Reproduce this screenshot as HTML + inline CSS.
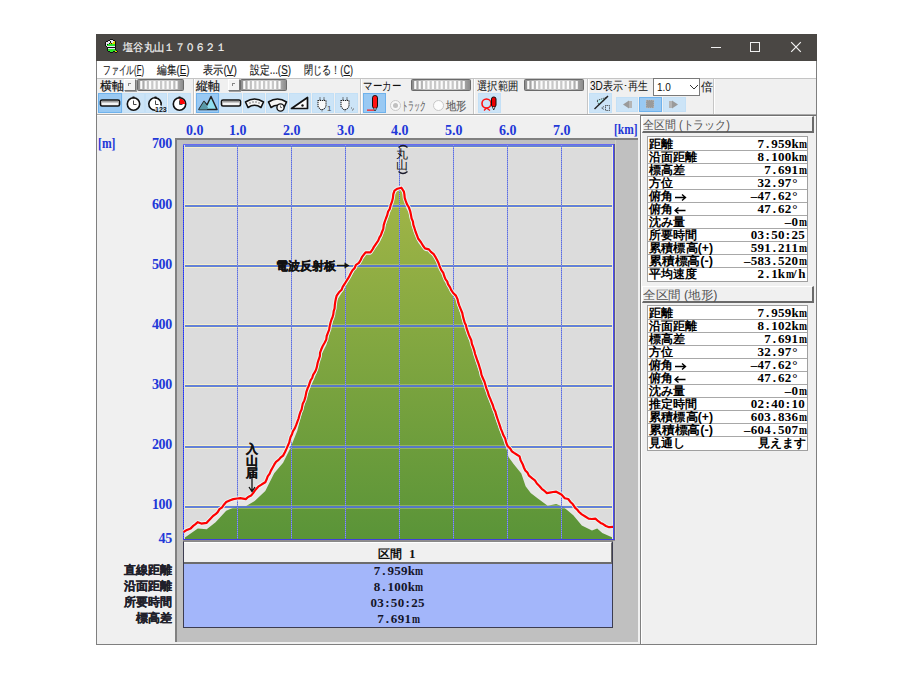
<!DOCTYPE html><html><head><meta charset="utf-8"><style>
*{margin:0;padding:0;box-sizing:border-box}
html,body{width:900px;height:675px;background:#fff;overflow:hidden;font-family:"Liberation Sans",sans-serif}
.a{position:absolute}
.t{position:absolute;white-space:nowrap;transform-origin:0 0;line-height:1}
.btn{position:absolute;background:#cce4f7;border:1px solid #c4e0f6}
.btn.sel{background:#99c9f3;border-color:#6fb2ec}
.vs{position:absolute;width:2px;background:#fff;border-left:1px solid #c6c6c6}
.mono{font-family:"Liberation Serif",serif;font-weight:bold}
.mono i{display:inline-block;width:6.8px;text-align:center;font-style:normal}
.mono i.n{transform:scaleX(0.74)}
</style></head><body>
<div class="a" style="left:96px;top:34px;width:721px;height:611px;background:#f0f0f0;border:1px solid #7f7f7f;border-top:none"></div>
<div class="a" style="left:96px;top:34px;width:721px;height:27px;background:#4a4744"></div>
<svg class="a" style="left:104px;top:39px" width="14" height="14" shape-rendering="crispEdges"><rect x="6" y="0" width="1" height="1" fill="#111"/><rect x="7" y="0" width="1" height="1" fill="#111"/><rect x="8" y="0" width="1" height="1" fill="#111"/><rect x="4" y="1" width="1" height="1" fill="#111"/><rect x="5" y="1" width="1" height="1" fill="#111"/><rect x="6" y="1" width="1" height="1" fill="#e6e6ee"/><rect x="7" y="1" width="1" height="1" fill="#e6e6ee"/><rect x="8" y="1" width="1" height="1" fill="#e6e6ee"/><rect x="9" y="1" width="1" height="1" fill="#111"/><rect x="10" y="1" width="1" height="1" fill="#111"/><rect x="2" y="2" width="1" height="1" fill="#111"/><rect x="3" y="2" width="1" height="1" fill="#111"/><rect x="4" y="2" width="1" height="1" fill="#e6e6ee"/><rect x="5" y="2" width="1" height="1" fill="#e6e6ee"/><rect x="6" y="2" width="1" height="1" fill="#111"/><rect x="7" y="2" width="1" height="1" fill="#e6e6ee"/><rect x="8" y="2" width="1" height="1" fill="#e6e6ee"/><rect x="9" y="2" width="1" height="1" fill="#e6e6ee"/><rect x="10" y="2" width="1" height="1" fill="#e0d400"/><rect x="11" y="2" width="1" height="1" fill="#111"/><rect x="1" y="3" width="1" height="1" fill="#111"/><rect x="2" y="3" width="1" height="1" fill="#e6e6ee"/><rect x="3" y="3" width="1" height="1" fill="#e6e6ee"/><rect x="4" y="3" width="1" height="1" fill="#e6e6ee"/><rect x="5" y="3" width="1" height="1" fill="#e6e6ee"/><rect x="6" y="3" width="1" height="1" fill="#111"/><rect x="7" y="3" width="1" height="1" fill="#e6e6ee"/><rect x="8" y="3" width="1" height="1" fill="#e6e6ee"/><rect x="9" y="3" width="1" height="1" fill="#e0d400"/><rect x="10" y="3" width="1" height="1" fill="#e0d400"/><rect x="11" y="3" width="1" height="1" fill="#111"/><rect x="1" y="4" width="1" height="1" fill="#111"/><rect x="2" y="4" width="1" height="1" fill="#e6e6ee"/><rect x="3" y="4" width="1" height="1" fill="#e6e6ee"/><rect x="4" y="4" width="1" height="1" fill="#e6e6ee"/><rect x="5" y="4" width="1" height="1" fill="#111"/><rect x="6" y="4" width="1" height="1" fill="#e0d400"/><rect x="7" y="4" width="1" height="1" fill="#111"/><rect x="8" y="4" width="1" height="1" fill="#e0d400"/><rect x="9" y="4" width="1" height="1" fill="#e0d400"/><rect x="10" y="4" width="1" height="1" fill="#e0d400"/><rect x="11" y="4" width="1" height="1" fill="#111"/><rect x="1" y="5" width="1" height="1" fill="#111"/><rect x="2" y="5" width="1" height="1" fill="#e6e6ee"/><rect x="3" y="5" width="1" height="1" fill="#111"/><rect x="4" y="5" width="1" height="1" fill="#2ae82a"/><rect x="5" y="5" width="1" height="1" fill="#2ae82a"/><rect x="6" y="5" width="1" height="1" fill="#2ae82a"/><rect x="7" y="5" width="1" height="1" fill="#2ae82a"/><rect x="8" y="5" width="1" height="1" fill="#2ae82a"/><rect x="9" y="5" width="1" height="1" fill="#2ae82a"/><rect x="10" y="5" width="1" height="1" fill="#2ae82a"/><rect x="11" y="5" width="1" height="1" fill="#111"/><rect x="1" y="6" width="1" height="1" fill="#111"/><rect x="2" y="6" width="1" height="1" fill="#e6e6ee"/><rect x="3" y="6" width="1" height="1" fill="#2ae82a"/><rect x="4" y="6" width="1" height="1" fill="#2ae82a"/><rect x="5" y="6" width="1" height="1" fill="#2ae82a"/><rect x="6" y="6" width="1" height="1" fill="#2ae82a"/><rect x="7" y="6" width="1" height="1" fill="#2ae82a"/><rect x="8" y="6" width="1" height="1" fill="#2ae82a"/><rect x="9" y="6" width="1" height="1" fill="#2ae82a"/><rect x="10" y="6" width="1" height="1" fill="#2ae82a"/><rect x="11" y="6" width="1" height="1" fill="#111"/><rect x="2" y="7" width="1" height="1" fill="#111"/><rect x="3" y="7" width="1" height="1" fill="#e6e6ee"/><rect x="4" y="7" width="1" height="1" fill="#e6e6ee"/><rect x="5" y="7" width="1" height="1" fill="#e6e6ee"/><rect x="6" y="7" width="1" height="1" fill="#e6e6ee"/><rect x="7" y="7" width="1" height="1" fill="#e6e6ee"/><rect x="8" y="7" width="1" height="1" fill="#e6e6ee"/><rect x="9" y="7" width="1" height="1" fill="#e6e6ee"/><rect x="10" y="7" width="1" height="1" fill="#e6e6ee"/><rect x="11" y="7" width="1" height="1" fill="#111"/><rect x="3" y="8" width="1" height="1" fill="#111"/><rect x="4" y="8" width="1" height="1" fill="#111"/><rect x="5" y="8" width="1" height="1" fill="#111"/><rect x="6" y="8" width="1" height="1" fill="#111"/><rect x="7" y="8" width="1" height="1" fill="#111"/><rect x="8" y="8" width="1" height="1" fill="#111"/><rect x="9" y="8" width="1" height="1" fill="#111"/><rect x="10" y="8" width="1" height="1" fill="#111"/><rect x="11" y="8" width="1" height="1" fill="#111"/><rect x="3" y="9" width="1" height="1" fill="#111"/><rect x="4" y="9" width="1" height="1" fill="#e6e6ee"/><rect x="5" y="9" width="1" height="1" fill="#e6e6ee"/><rect x="6" y="9" width="1" height="1" fill="#e6e6ee"/><rect x="7" y="9" width="1" height="1" fill="#e6e6ee"/><rect x="8" y="9" width="1" height="1" fill="#e6e6ee"/><rect x="9" y="9" width="1" height="1" fill="#e6e6ee"/><rect x="10" y="9" width="1" height="1" fill="#e6e6ee"/><rect x="11" y="9" width="1" height="1" fill="#111"/><rect x="3" y="10" width="1" height="1" fill="#111"/><rect x="4" y="10" width="1" height="1" fill="#2ae82a"/><rect x="5" y="10" width="1" height="1" fill="#2ae82a"/><rect x="6" y="10" width="1" height="1" fill="#2ae82a"/><rect x="7" y="10" width="1" height="1" fill="#2ae82a"/><rect x="8" y="10" width="1" height="1" fill="#2ae82a"/><rect x="9" y="10" width="1" height="1" fill="#2ae82a"/><rect x="10" y="10" width="1" height="1" fill="#2ae82a"/><rect x="11" y="10" width="1" height="1" fill="#111"/><rect x="3" y="11" width="1" height="1" fill="#111"/><rect x="4" y="11" width="1" height="1" fill="#2ae82a"/><rect x="5" y="11" width="1" height="1" fill="#2ae82a"/><rect x="6" y="11" width="1" height="1" fill="#2ae82a"/><rect x="7" y="11" width="1" height="1" fill="#2ae82a"/><rect x="8" y="11" width="1" height="1" fill="#2ae82a"/><rect x="9" y="11" width="1" height="1" fill="#2ae82a"/><rect x="10" y="11" width="1" height="1" fill="#2ae82a"/><rect x="11" y="11" width="1" height="1" fill="#2ae82a"/><rect x="12" y="11" width="1" height="1" fill="#111"/><rect x="4" y="12" width="1" height="1" fill="#111"/><rect x="5" y="12" width="1" height="1" fill="#111"/><rect x="6" y="12" width="1" height="1" fill="#2ae82a"/><rect x="7" y="12" width="1" height="1" fill="#2ae82a"/><rect x="8" y="12" width="1" height="1" fill="#2ae82a"/><rect x="9" y="12" width="1" height="1" fill="#111"/><rect x="10" y="12" width="1" height="1" fill="#111"/><rect x="11" y="12" width="1" height="1" fill="#e0d400"/><rect x="12" y="12" width="1" height="1" fill="#e0d400"/><rect x="13" y="12" width="1" height="1" fill="#111"/><rect x="6" y="13" width="1" height="1" fill="#111"/><rect x="7" y="13" width="1" height="1" fill="#111"/><rect x="8" y="13" width="1" height="1" fill="#111"/><rect x="11" y="13" width="1" height="1" fill="#111"/><rect x="12" y="13" width="1" height="1" fill="#111"/></svg>
<div class="t" id="f1" style="left:123px;top:42px;font-size:11px;color:#f6f6f6;-webkit-text-stroke:0.2px;transform:scaleX(0.9364);">塩谷丸山１７０６２１</div>
<div class="a" style="left:711px;top:47px;width:10px;height:1px;background:#f0f0f0"></div>
<div class="a" style="left:750px;top:42px;width:10px;height:10px;border:1px solid #f0f0f0"></div>
<svg class="a" style="left:790px;top:41px" width="12" height="12"><path d="M1.2 1.2L10.8 10.8M10.8 1.2L1.2 10.8" stroke="#f4f4f4" stroke-width="1.2"/></svg>
<div class="a" style="left:97px;top:61px;width:719px;height:17px;background:#fff"></div>
<div class="t" id="f2" style="left:103px;top:64px;font-size:12px;color:#1a1a1a;-webkit-text-stroke:0.15px;transform:scaleX(0.6473);">ファイル(<u>F</u>)</div>
<div class="t" id="f3" style="left:157px;top:64px;font-size:12px;color:#1a1a1a;-webkit-text-stroke:0.15px;transform:scaleX(0.8122);">編集(<u>E</u>)</div>
<div class="t" id="f4" style="left:203px;top:64px;font-size:12px;color:#1a1a1a;-webkit-text-stroke:0.15px;transform:scaleX(0.8497);">表示(<u>V</u>)</div>
<div class="t" id="f5" style="left:250px;top:64px;font-size:12px;color:#1a1a1a;-webkit-text-stroke:0.15px;transform:scaleX(0.8197);">設定...(<u>S</u>)</div>
<div class="t" id="f6" style="left:304px;top:64px;font-size:12px;color:#1a1a1a;-webkit-text-stroke:0.15px;transform:scaleX(0.7577);">閉じる！(<u>C</u>)</div>
<div class="a" style="left:97px;top:78px;width:719px;height:37px;background:#f0f0f0;border-top:1px solid #c4c4c4;border-bottom:1px solid #a8a8a8"></div>
<div class="a" style="left:97px;top:115px;width:719px;height:1px;background:#fff"></div>
<div class="t" style="left:100px;top:80px;font-size:12px;color:#111;-webkit-text-stroke:0.2px;">横軸</div>
<div class="a" style="left:124px;top:79px;width:12px;height:12px;background:#f4f4f4;border-right:1px solid #777;border-bottom:1px solid #777;border-left:1px solid #fff;border-top:1px solid #fff;box-shadow:1px 1px 0 #a0a0a0"></div>
<div class="a" style="left:128px;top:83px;width:3px;height:3px;border-left:1px solid #888;border-top:1px solid #888"></div>
<svg class="a" style="left:137px;top:79px" width="47" height="12"><defs><linearGradient id="sg137" x1="0" x2="1"><stop offset="0" stop-color="#8a8a8a"/><stop offset="0.25" stop-color="#c8c8c8"/><stop offset="0.75" stop-color="#c8c8c8"/><stop offset="1" stop-color="#8a8a8a"/></linearGradient></defs><rect x="0.5" y="0.5" width="46" height="11" rx="1" fill="url(#sg137)" stroke="#6a6a6a"/><rect x="3.2" y="2" width="2.2" height="8" fill="#fbfbfb"/><rect x="7.6" y="2" width="2.2" height="8" fill="#fbfbfb"/><rect x="12.0" y="2" width="2.2" height="8" fill="#fbfbfb"/><rect x="16.4" y="2" width="2.2" height="8" fill="#fbfbfb"/><rect x="20.8" y="2" width="2.2" height="8" fill="#fbfbfb"/><rect x="25.2" y="2" width="2.2" height="8" fill="#fbfbfb"/><rect x="29.6" y="2" width="2.2" height="8" fill="#fbfbfb"/><rect x="34.0" y="2" width="2.2" height="8" fill="#fbfbfb"/><rect x="38.4" y="2" width="2.2" height="8" fill="#fbfbfb"/></svg>
<div class="t" style="left:196px;top:80px;font-size:12px;color:#111;-webkit-text-stroke:0.2px;">縦軸</div>
<div class="a" style="left:228px;top:79px;width:12px;height:12px;background:#f4f4f4;border-right:1px solid #777;border-bottom:1px solid #777;border-left:1px solid #fff;border-top:1px solid #fff;box-shadow:1px 1px 0 #a0a0a0"></div>
<div class="a" style="left:232px;top:83px;width:3px;height:3px;border-left:1px solid #888;border-top:1px solid #888"></div>
<svg class="a" style="left:240px;top:79px" width="47" height="12"><defs><linearGradient id="sg240" x1="0" x2="1"><stop offset="0" stop-color="#8a8a8a"/><stop offset="0.25" stop-color="#c8c8c8"/><stop offset="0.75" stop-color="#c8c8c8"/><stop offset="1" stop-color="#8a8a8a"/></linearGradient></defs><rect x="0.5" y="0.5" width="46" height="11" rx="1" fill="url(#sg240)" stroke="#6a6a6a"/><rect x="3.2" y="2" width="2.2" height="8" fill="#fbfbfb"/><rect x="7.6" y="2" width="2.2" height="8" fill="#fbfbfb"/><rect x="12.0" y="2" width="2.2" height="8" fill="#fbfbfb"/><rect x="16.4" y="2" width="2.2" height="8" fill="#fbfbfb"/><rect x="20.8" y="2" width="2.2" height="8" fill="#fbfbfb"/><rect x="25.2" y="2" width="2.2" height="8" fill="#fbfbfb"/><rect x="29.6" y="2" width="2.2" height="8" fill="#fbfbfb"/><rect x="34.0" y="2" width="2.2" height="8" fill="#fbfbfb"/><rect x="38.4" y="2" width="2.2" height="8" fill="#fbfbfb"/></svg>
<div class="t" id="f7" style="left:363px;top:80px;font-size:12px;color:#111;transform:scaleX(0.7917);">マーカー</div>
<svg class="a" style="left:411px;top:79px" width="60" height="12"><defs><linearGradient id="sg411" x1="0" x2="1"><stop offset="0" stop-color="#8a8a8a"/><stop offset="0.25" stop-color="#c8c8c8"/><stop offset="0.75" stop-color="#c8c8c8"/><stop offset="1" stop-color="#8a8a8a"/></linearGradient></defs><rect x="0.5" y="0.5" width="59" height="11" rx="1" fill="url(#sg411)" stroke="#6a6a6a"/><rect x="3.2" y="2" width="2.2" height="8" fill="#fbfbfb"/><rect x="7.6" y="2" width="2.2" height="8" fill="#fbfbfb"/><rect x="12.0" y="2" width="2.2" height="8" fill="#fbfbfb"/><rect x="16.4" y="2" width="2.2" height="8" fill="#fbfbfb"/><rect x="20.8" y="2" width="2.2" height="8" fill="#fbfbfb"/><rect x="25.2" y="2" width="2.2" height="8" fill="#fbfbfb"/><rect x="29.6" y="2" width="2.2" height="8" fill="#fbfbfb"/><rect x="34.0" y="2" width="2.2" height="8" fill="#fbfbfb"/><rect x="38.4" y="2" width="2.2" height="8" fill="#fbfbfb"/><rect x="42.8" y="2" width="2.2" height="8" fill="#fbfbfb"/><rect x="47.2" y="2" width="2.2" height="8" fill="#fbfbfb"/><rect x="51.6" y="2" width="2.2" height="8" fill="#fbfbfb"/></svg>
<div class="t" id="f8" style="left:477px;top:80px;font-size:12px;color:#111;transform:scaleX(0.8646);">選択範囲</div>
<svg class="a" style="left:524px;top:79px" width="60" height="12"><defs><linearGradient id="sg524" x1="0" x2="1"><stop offset="0" stop-color="#8a8a8a"/><stop offset="0.25" stop-color="#c8c8c8"/><stop offset="0.75" stop-color="#c8c8c8"/><stop offset="1" stop-color="#8a8a8a"/></linearGradient></defs><rect x="0.5" y="0.5" width="59" height="11" rx="1" fill="url(#sg524)" stroke="#6a6a6a"/><rect x="3.2" y="2" width="2.2" height="8" fill="#fbfbfb"/><rect x="7.6" y="2" width="2.2" height="8" fill="#fbfbfb"/><rect x="12.0" y="2" width="2.2" height="8" fill="#fbfbfb"/><rect x="16.4" y="2" width="2.2" height="8" fill="#fbfbfb"/><rect x="20.8" y="2" width="2.2" height="8" fill="#fbfbfb"/><rect x="25.2" y="2" width="2.2" height="8" fill="#fbfbfb"/><rect x="29.6" y="2" width="2.2" height="8" fill="#fbfbfb"/><rect x="34.0" y="2" width="2.2" height="8" fill="#fbfbfb"/><rect x="38.4" y="2" width="2.2" height="8" fill="#fbfbfb"/><rect x="42.8" y="2" width="2.2" height="8" fill="#fbfbfb"/><rect x="47.2" y="2" width="2.2" height="8" fill="#fbfbfb"/><rect x="51.6" y="2" width="2.2" height="8" fill="#fbfbfb"/></svg>
<div class="t" id="f9" style="left:590px;top:80px;font-size:12px;color:#111;transform:scaleX(0.8364);">3D表示･再生</div>
<div class="a" style="left:653px;top:78px;width:47px;height:18px;background:#fff;border:1px solid #7a7a7a"></div>
<div class="t" style="left:657px;top:83px;font-size:10px;color:#111;">1.0</div>
<svg class="a" style="left:689px;top:84px" width="10" height="6"><path d="M1 1L5 5L9 1" fill="none" stroke="#333" stroke-width="1"/></svg>
<div class="t" style="left:701px;top:81px;font-size:12px;color:#111;">倍</div>
<div class="vs" style="left:193px;top:79px;height:35px"></div>
<div class="vs" style="left:360px;top:79px;height:35px"></div>
<div class="vs" style="left:473px;top:79px;height:35px"></div>
<div class="vs" style="left:587px;top:79px;height:35px"></div>
<div class="vs" style="left:713px;top:79px;height:35px"></div>
<div class="btn sel" style="left:98px;top:93px;width:24px;height:20px"></div>
<div class="btn" style="left:122px;top:93px;width:23px;height:20px"></div>
<div class="btn" style="left:145px;top:93px;width:22px;height:20px"></div>
<div class="btn" style="left:168px;top:93px;width:23px;height:20px"></div>
<div class="btn sel" style="left:196px;top:93px;width:23px;height:20px"></div>
<div class="btn" style="left:219px;top:93px;width:23px;height:20px"></div>
<div class="btn" style="left:243px;top:93px;width:22px;height:20px"></div>
<div class="btn" style="left:266px;top:93px;width:22px;height:20px"></div>
<div class="btn" style="left:289px;top:93px;width:22px;height:20px"></div>
<div class="btn" style="left:312px;top:93px;width:22px;height:20px"></div>
<div class="btn" style="left:335px;top:93px;width:23px;height:20px"></div>
<div class="btn sel" style="left:363px;top:93px;width:23px;height:20px"></div>
<div class="btn" style="left:478px;top:93px;width:23px;height:20px"></div>
<div class="btn" style="left:589px;top:93px;width:23px;height:20px"></div>
<div class="btn" style="left:616px;top:97px;width:22px;height:15px"></div>
<div class="btn sel" style="left:639px;top:97px;width:23px;height:15px"></div>
<div class="btn" style="left:663px;top:97px;width:23px;height:15px"></div>

<svg class="a" style="left:99px;top:99px" width="22" height="8"><rect x="1.5" y="1" width="19" height="6" rx="1.5" fill="#f4f4f4" stroke="#111" stroke-width="1.6"/><path d="M4 2V3.5M6 2V3.5M8 2V3.5M10 2V3.5M12 2V3.5M14 2V3.5M16 2V3.5M18 2V3.5" stroke="#333" stroke-width="0.9"/></svg>
<svg class="a" style="left:125px;top:95px" width="18" height="17"><circle cx="8.5" cy="9" r="6.2" fill="#fff" stroke="#111" stroke-width="1.6"/><path d="M7.5 1.5h2v2h-2z" fill="#111"/><path d="M8.5 5.5V9.5H11.5" fill="none" stroke="#444" stroke-width="1"/></svg>
<svg class="a" style="left:147px;top:95px" width="20" height="17"><path d="M14 10.5 A6.2 6.2 0 1 0 8.5 15.2" fill="#fff" stroke="#111" stroke-width="1.6"/><path d="M7.5 1.5h2v2h-2z" fill="#111"/><path d="M8.5 5.5V9.5H11.5" fill="none" stroke="#444" stroke-width="1"/><text x="8" y="16.5" font-size="7" font-weight="bold" font-family="Liberation Sans" fill="#111">123</text></svg>
<svg class="a" style="left:171px;top:95px" width="18" height="17"><circle cx="8.5" cy="9" r="6.2" fill="#fff" stroke="#111" stroke-width="1.6"/><path d="M8.5 3.5 A5.5 5.5 0 0 1 14 9 L8.5 9Z" fill="#ff0000"/><path d="M7.5 1.5h2v2h-2z" fill="#111"/><path d="M8.5 5.5V9.5H11.5" fill="none" stroke="#444" stroke-width="1"/></svg>
<svg class="a" style="left:197px;top:95px" width="22" height="16"><path d="M2 14.5L7 6.5L10 10L14 1.5L20 14.5Z" fill="#90e0f0" stroke="#222" stroke-width="1.5" stroke-linejoin="round"/><path d="M2 14.5L7 6.5L11 12.5L10 14.5Z" fill="#5a9aa8"/></svg>
<svg class="a" style="left:220px;top:99px" width="22" height="8"><rect x="1.5" y="1" width="19" height="6" rx="1.5" fill="#f4f4f4" stroke="#111" stroke-width="1.6"/><path d="M4 2V3.5M6 2V3.5M8 2V3.5M10 2V3.5M12 2V3.5M14 2V3.5M16 2V3.5M18 2V3.5" stroke="#333" stroke-width="0.9"/></svg>
<svg class="a" style="left:244px;top:97px" width="21" height="12"><path d="M1.5 5 Q10.5 -1 19.5 5 L17 10.5 Q10.5 6 4 10.5Z" fill="#f6f6f6" stroke="#111" stroke-width="1.6" stroke-linejoin="round"/><path d="M6 5v2M9 4v2M12 4v2M15 5v2" stroke="#666" stroke-width="0.8"/></svg>
<svg class="a" style="left:267px;top:96px" width="21" height="16"><path d="M1.5 6 Q10.5 0 19.5 6 L17 11.5 Q10.5 7 4 11.5Z" fill="#f6f6f6" stroke="#111" stroke-width="1.6" stroke-linejoin="round"/><circle cx="13.5" cy="11.5" r="3.6" fill="#f6f6f6" stroke="#111" stroke-width="1.4"/><path d="M13.5 9.5v2h1.5" stroke="#555" stroke-width="0.8" fill="none"/></svg>
<svg class="a" style="left:290px;top:96px" width="20" height="14"><path d="M1.5 12.5L17.5 1.5V12.5Z" fill="#fafafa" stroke="#111" stroke-width="1.7" stroke-linejoin="round"/><circle cx="12.5" cy="9.5" r="1.2" fill="#111"/></svg>
<svg class="a" style="left:314px;top:96px" width="20" height="16"><path d="M4 4.5h8v6l-2.5 3h-3l-2.5-3z" fill="#fafafa" stroke="#222" stroke-width="1.1" stroke-dasharray="1.2 0.8"/><path d="M6 1.5v3M10 1.5v3M8 13.5v2" stroke="#222" stroke-width="1.1" stroke-dasharray="1 0.8"/><text x="13" y="15" font-size="8" font-family="Liberation Sans" fill="#444">1</text></svg>
<svg class="a" style="left:337px;top:96px" width="20" height="16"><path d="M4 4.5h8v6l-2.5 3h-3l-2.5-3z" fill="#fafafa" stroke="#222" stroke-width="1.1" stroke-dasharray="1.2 0.8"/><path d="M6 1.5v3M10 1.5v3M8 13.5v2" stroke="#222" stroke-width="1.1" stroke-dasharray="1 0.8"/><path d="M14 12h1M16 13h1M15 14h1" stroke="#666" stroke-width="1"/></svg>
<svg class="a" style="left:366px;top:94px" width="18" height="18"><rect x="6.5" y="1.5" width="5" height="13" rx="2.4" fill="#ff1010" stroke="#111" stroke-width="1"/><path d="M7.5 14.5L9 17L10.5 14.5" fill="#f4f4f4" stroke="#111" stroke-width="0.8"/><rect x="1" y="15.5" width="7" height="1.3" fill="#ff2020"/></svg>
<svg class="a" style="left:480px;top:95px" width="20" height="17"><circle cx="6.5" cy="8.5" r="4.5" fill="none" stroke="#ff1010" stroke-width="1.6"/><path d="M6.5 13 L4 15.5M6.5 13 L10 15.5" stroke="#ff1010" stroke-width="1.3"/><rect x="11.5" y="2" width="4.5" height="10" rx="2" fill="#e00" stroke="#111" stroke-width="1"/><path d="M12.5 12L13.7 15L15 12" fill="#fff" stroke="#111" stroke-width="0.8"/></svg>
<svg class="a" style="left:591px;top:94px" width="22" height="18"><path d="M6 6.5L16.5 3L8 11Z" fill="#b8eef4" stroke="#333" stroke-width="0.9" stroke-dasharray="1.2 0.8"/><path d="M3.5 15L17 2" stroke="#222" stroke-width="1.4"/><path d="M13 12.5L10.5 14L13 15.5" fill="none" stroke="#333" stroke-width="0.9" stroke-dasharray="1 0.7"/><rect x="14.5" y="11.5" width="4" height="5" fill="none" stroke="#333" stroke-width="0.9" stroke-dasharray="1 0.7"/></svg>
<svg class="a" style="left:620px;top:99px" width="14" height="11"><path d="M3 5.5L9 1.5V9.5Z" fill="#9a9a9a"/><rect x="9" y="2" width="3" height="7" fill="#b4b4b4"/></svg>
<svg class="a" style="left:645px;top:99px" width="11" height="11"><rect x="1" y="1" width="8" height="8" fill="#9a9a9a" stroke="#c6c6c6" stroke-width="0.8" stroke-dasharray="1 1"/></svg>
<svg class="a" style="left:667px;top:99px" width="14" height="11"><rect x="2" y="2" width="3" height="7" fill="#b4b4b4"/><path d="M11 5.5L5 1.5V9.5Z" fill="#9a9a9a"/></svg>

<div class="a" style="left:389.5px;top:100px;width:11px;height:11px;border-radius:50%;border:1px solid #c8c8c8;background:#f8f8f8"></div>
<div class="a" style="left:392.5px;top:103px;width:5px;height:5px;border-radius:50%;background:#c0c0c0"></div>
<div class="t" id="f10" style="left:402px;top:100px;font-size:12px;color:#5a5a5a;-webkit-text-stroke:0.15px;transform:scaleX(0.4896);">トラック</div>
<div class="a" style="left:432.5px;top:100px;width:11px;height:11px;border-radius:50%;border:1px solid #c8c8c8;background:#fcfcfc"></div>
<div class="t" id="f11" style="left:446px;top:100px;font-size:12px;color:#5a5a5a;-webkit-text-stroke:0.15px;transform:scaleX(0.8542);">地形</div>
<div class="a" style="left:175px;top:138px;width:464px;height:504px;background:#c0c0c0;border-top:2px solid #808080;border-left:2px solid #808080"></div>
<div class="a" style="left:638px;top:116px;width:2px;height:528px;background:#f0f0f0"></div>
<div class="a" style="left:640px;top:115px;width:1px;height:529px;background:#808080"></div>
<div class="a" style="left:641px;top:115px;width:1px;height:529px;background:#fff"></div>
<div class="t" id="f12" style="left:98px;top:137px;font-size:14px;color:#2238d8;font-weight:bold;font-family:'Liberation Serif',serif;transform:scaleX(0.8333);">[m]</div>
<div class="t" style="left:112px;width:60px;text-align:right;top:136px;font:bold 14px 'Liberation Serif',serif;letter-spacing:-0.3px;color:#2238d8">700</div>
<div class="t" style="left:112px;width:60px;text-align:right;top:197px;font:bold 14px 'Liberation Serif',serif;letter-spacing:-0.3px;color:#2238d8">600</div>
<div class="t" style="left:112px;width:60px;text-align:right;top:257px;font:bold 14px 'Liberation Serif',serif;letter-spacing:-0.3px;color:#2238d8">500</div>
<div class="t" style="left:112px;width:60px;text-align:right;top:317px;font:bold 14px 'Liberation Serif',serif;letter-spacing:-0.3px;color:#2238d8">400</div>
<div class="t" style="left:112px;width:60px;text-align:right;top:377px;font:bold 14px 'Liberation Serif',serif;letter-spacing:-0.3px;color:#2238d8">300</div>
<div class="t" style="left:112px;width:60px;text-align:right;top:437px;font:bold 14px 'Liberation Serif',serif;letter-spacing:-0.3px;color:#2238d8">200</div>
<div class="t" style="left:112px;width:60px;text-align:right;top:497px;font:bold 14px 'Liberation Serif',serif;letter-spacing:-0.3px;color:#2238d8">100</div>
<div class="t" style="left:112px;width:60px;text-align:right;top:531px;font:bold 14px 'Liberation Serif',serif;letter-spacing:-0.3px;color:#2238d8">45</div>
<div class="t" style="left:186px;top:124px;font-size:14px;color:#2238d8;font-weight:bold;font-family:'Liberation Serif',serif;">0.0</div>
<div class="t" style="left:229px;top:124px;font-size:14px;color:#2238d8;font-weight:bold;font-family:'Liberation Serif',serif;">1.0</div>
<div class="t" style="left:283px;top:124px;font-size:14px;color:#2238d8;font-weight:bold;font-family:'Liberation Serif',serif;">2.0</div>
<div class="t" style="left:337px;top:124px;font-size:14px;color:#2238d8;font-weight:bold;font-family:'Liberation Serif',serif;">3.0</div>
<div class="t" style="left:391px;top:124px;font-size:14px;color:#2238d8;font-weight:bold;font-family:'Liberation Serif',serif;">4.0</div>
<div class="t" style="left:445px;top:124px;font-size:14px;color:#2238d8;font-weight:bold;font-family:'Liberation Serif',serif;">5.0</div>
<div class="t" style="left:499px;top:124px;font-size:14px;color:#2238d8;font-weight:bold;font-family:'Liberation Serif',serif;">6.0</div>
<div class="t" style="left:553px;top:124px;font-size:14px;color:#2238d8;font-weight:bold;font-family:'Liberation Serif',serif;">7.0</div>
<div class="t" id="f13" style="left:614px;top:123px;font-size:14px;color:#2238d8;font-weight:bold;font-family:'Liberation Serif',serif;transform:scaleX(0.8165);">[km]</div>
<svg class="a" width="432" height="397" style="left:183px;top:144px" shape-rendering="crispEdges">
<defs><linearGradient id="gg" x1="0" y1="0" x2="0" y2="395" gradientUnits="userSpaceOnUse"><stop offset="0" stop-color="#abba49"/><stop offset="1" stop-color="#5a9438"/></linearGradient>
<pattern id="dot" width="1" height="2" patternUnits="userSpaceOnUse"><rect width="1" height="1" fill="#5a6ce0"/><rect y="1" width="1" height="1" fill="#8e9ae6"/></pattern>
<pattern id="dot2" width="1" height="2" patternUnits="userSpaceOnUse"><rect width="1" height="1" fill="#2535f0"/><rect y="1" width="1" height="1" fill="#4a58f4"/></pattern>
<clipPath id="cp"><rect x="0" y="0" width="430" height="395"/></clipPath></defs>
<rect x="0" y="0" width="432" height="397" fill="#dcdcdc"/>
<rect x="0" y="0" width="432" height="4" fill="#f6f0dc"/>
<rect x="0" y="60" width="432" height="4" fill="#f6f0dc"/>
<rect x="0" y="120" width="432" height="4" fill="#f6f0dc"/>
<rect x="0" y="180" width="432" height="4" fill="#f6f0dc"/>
<rect x="0" y="240" width="432" height="4" fill="#f6f0dc"/>
<rect x="0" y="301" width="432" height="4" fill="#f6f0dc"/>
<rect x="0" y="361" width="432" height="4" fill="#f6f0dc"/>
<g clip-path="url(#cp)">
<polygon shape-rendering="auto" points="0.5,388.0 7.7,384.4 14.8,378.2 18.3,379.6 23.7,378.8 32.6,370.2 43.2,358.1 50.3,355.1 57.4,354.2 62.8,355.1 68.1,351.6 75.2,342.7 82.3,338.2 89.4,324.0 93.0,317.8 100.1,311.6 103.7,304.4 109.0,290.2 114.3,277.8 117.4,268.0 125.7,242.1 134.0,222.4 138.1,205.8 143.3,195.4 147.5,178.8 151.6,164.3 153.7,151.6 158.6,145.8 166.3,132.3 173.0,120.8 175.9,118.9 182.6,108.3 187.5,108.3 195.2,96.7 199.0,88.0 202.9,74.5 207.7,61.0 211.5,46.6 214.4,44.7 218.3,43.7 220.9,47.6 222.8,57.2 225.7,63.0 228.6,74.5 231.5,84.2 235.3,94.8 242.0,104.4 245.9,105.4 250.7,110.2 255.5,118.9 261.3,132.3 268.1,145.8 272.9,151.6 277.7,165.1 280.0,172.6 283.6,184.4 288.3,196.3 293.1,212.9 297.8,227.1 302.5,241.3 308.5,257.9 314.4,274.5 320.3,291.1 324.7,302.2 328.9,307.3 336.6,312.4 340.9,323.5 346.0,331.7 351.9,336.3 358.8,344.8 363.9,349.1 373.2,347.7 378.4,350.4 381.8,354.2 385.2,355.0 392.0,363.6 398.8,370.4 405.6,374.6 412.4,374.6 417.6,378.9 426.1,383.2 431.0,382.8 432,397 0,397" fill="#e6e6e6"/>
<polygon shape-rendering="auto" points="0.5,394.5 14.8,384.4 23.7,385.3 32.6,378.2 43.2,366.7 53.9,362.2 62.8,362.2 71.7,356.9 82.3,347.1 91.2,329.3 100.1,318.7 107.2,304.4 114.3,286.7 117.4,273.9 125.7,247.4 134.0,228.0 138.1,211.3 143.3,200.9 147.5,185.8 151.6,171.8 153.7,156.7 158.6,149.1 166.3,135.9 173.0,123.9 175.9,121.9 182.6,110.7 187.5,110.7 195.2,100.4 199.0,93.5 202.9,80.4 207.7,67.1 211.5,51.3 214.4,46.7 218.3,45.7 220.9,53.3 222.8,63.2 225.7,68.7 228.6,81.3 231.5,89.9 235.3,98.7 242.0,106.9 245.9,107.6 250.7,113.3 255.5,123.1 261.3,136.5 268.1,149.3 272.9,155.6 277.7,170.7 280.0,178.8 283.6,189.8 288.3,202.0 293.1,219.0 297.8,232.8 302.5,246.8 308.5,263.2 314.4,279.9 320.1,296.0 323.7,305.8 325.5,313.0 330.6,320.1 338.3,329.5 342.6,342.2 347.7,349.1 354.5,354.2 364.7,361.8 373.2,360.1 380.1,362.7 390.3,371.2 398.8,381.4 409.0,386.6 414.2,384.5 419.3,389.1 431.0,394.2 432,397 0,397" fill="url(#gg)"/>
</g>
<rect x="0" y="0" width="432" height="1" fill="#f6f0a0" opacity="0.3"/><rect x="0" y="3" width="432" height="1" fill="#f6f0a0" opacity="0.3"/>
<rect x="0" y="60" width="432" height="1" fill="#f6f0a0" opacity="0.3"/><rect x="0" y="63" width="432" height="1" fill="#f6f0a0" opacity="0.3"/>
<rect x="0" y="120" width="432" height="1" fill="#f6f0a0" opacity="0.3"/><rect x="0" y="123" width="432" height="1" fill="#f6f0a0" opacity="0.3"/>
<rect x="0" y="180" width="432" height="1" fill="#f6f0a0" opacity="0.3"/><rect x="0" y="183" width="432" height="1" fill="#f6f0a0" opacity="0.3"/>
<rect x="0" y="240" width="432" height="1" fill="#f6f0a0" opacity="0.3"/><rect x="0" y="243" width="432" height="1" fill="#f6f0a0" opacity="0.3"/>
<rect x="0" y="301" width="432" height="1" fill="#f6f0a0" opacity="0.3"/><rect x="0" y="304" width="432" height="1" fill="#f6f0a0" opacity="0.3"/>
<rect x="0" y="361" width="432" height="1" fill="#f6f0a0" opacity="0.3"/><rect x="0" y="364" width="432" height="1" fill="#f6f0a0" opacity="0.3"/>
<rect x="0" y="1" width="432" height="2" fill="#5474d6" opacity="0.9"/>
<rect x="0" y="61" width="432" height="2" fill="#5474d6" opacity="0.9"/>
<rect x="0" y="121" width="432" height="2" fill="#5474d6" opacity="0.9"/>
<rect x="0" y="181" width="432" height="2" fill="#5474d6" opacity="0.9"/>
<rect x="0" y="241" width="432" height="2" fill="#5474d6" opacity="0.9"/>
<rect x="0" y="302" width="432" height="2" fill="#5474d6" opacity="0.9"/>
<rect x="0" y="362" width="432" height="2" fill="#5474d6" opacity="0.9"/>
<rect x="54" y="0" width="1" height="397" fill="url(#dot)"/>
<rect x="108" y="0" width="1" height="397" fill="url(#dot)"/>
<rect x="162" y="0" width="1" height="397" fill="url(#dot)"/>
<rect x="216" y="0" width="1" height="397" fill="url(#dot)"/>
<rect x="270" y="0" width="1" height="397" fill="url(#dot)"/>
<rect x="324" y="0" width="1" height="397" fill="url(#dot)"/>
<rect x="378" y="0" width="1" height="397" fill="url(#dot)"/>
<rect x="1" y="0" width="1" height="395" fill="#e2e4d6"/>
<rect x="0" y="0" width="1" height="397" fill="url(#dot2)"/>
<rect x="429" y="0" width="1" height="395" fill="#eeeed8"/>
<rect x="0" y="0" width="432" height="1" fill="#6a6af0"/>
<g clip-path="url(#cp)">
<polyline shape-rendering="auto" points="0.5,388.0 3.9,385.9 7.7,384.4 10.2,381.9 12.5,380.1 14.8,378.2 18.3,379.6 23.7,378.8 25.5,376.7 27.7,374.4 30.0,372.0 32.6,370.2 34.7,368.1 36.5,365.1 39.1,363.3 41.1,360.4 43.2,358.1 47.2,356.2 50.3,355.1 54.2,354.5 57.4,354.2 62.8,355.1 65.1,353.0 68.1,351.6 70.3,348.9 72.5,345.7 75.2,342.7 78.9,340.3 82.3,338.2 83.8,335.0 84.7,332.3 86.7,329.6 87.8,326.9 89.4,324.0 91.2,320.7 93.0,317.8 95.6,315.9 97.5,313.7 100.1,311.6 101.9,308.3 103.7,304.4 105.0,301.4 106.3,298.4 106.8,296.1 107.6,293.0 109.0,290.2 109.9,287.3 111.9,284.1 113.3,280.7 114.3,277.8 115.5,274.6 116.4,271.2 117.4,268.0 118.6,265.5 119.2,262.4 119.8,259.5 121.2,256.9 122.3,253.4 122.8,250.9 123.4,247.8 124.5,244.6 125.7,242.1 126.5,239.5 127.7,236.2 129.2,234.0 130.1,230.8 131.7,228.4 133.1,225.5 134.0,222.4 134.6,219.0 135.5,216.1 136.9,212.1 137.0,208.9 138.1,205.8 139.6,202.3 141.6,198.7 143.3,195.4 143.7,192.0 144.9,188.8 146.2,185.6 146.7,182.2 147.5,178.8 148.5,175.5 149.5,173.3 150.3,170.4 150.7,167.1 151.6,164.3 151.8,161.2 152.3,157.6 152.9,154.5 153.7,151.6 156.0,148.3 158.6,145.8 159.7,142.8 161.3,140.3 162.8,138.0 164.9,134.7 166.3,132.3 167.8,129.3 169.5,126.2 171.6,124.1 173.0,120.8 175.9,118.9 177.5,116.2 178.9,113.2 180.8,110.7 182.6,108.3 187.5,108.3 189.7,105.1 190.9,102.9 193.3,99.3 195.2,96.7 196.5,93.4 197.8,91.3 199.0,88.0 200.3,84.8 200.7,81.1 201.6,78.1 202.9,74.5 204.1,71.4 205.1,67.5 206.8,64.8 207.7,61.0 209.0,57.7 209.9,54.0 210.3,50.2 211.5,46.6 214.4,44.7 218.3,43.7 220.9,47.6 221.4,50.4 221.7,53.8 222.8,57.2 224.0,60.3 225.7,63.0 227.1,66.8 228.0,71.1 228.6,74.5 230.0,77.6 230.3,80.7 231.5,84.2 232.5,87.5 234.1,91.6 235.3,94.8 237.8,98.0 239.9,101.5 242.0,104.4 245.9,105.4 247.9,107.9 250.7,110.2 252.7,113.4 254.1,116.0 255.5,118.9 256.7,122.5 258.2,125.9 260.3,128.9 261.3,132.3 262.6,135.4 264.2,137.4 265.0,140.1 267.1,143.4 268.1,145.8 270.2,149.0 272.9,151.6 274.5,155.1 275.2,158.4 276.2,161.3 277.7,165.1 279.3,169.0 280.0,172.6 280.9,175.9 281.7,178.8 283.0,181.2 283.6,184.4 284.6,187.2 285.7,190.4 286.9,193.3 288.3,196.3 288.9,200.0 290.1,202.9 291.3,206.6 292.1,210.0 293.1,212.9 294.3,216.5 295.5,219.6 296.6,223.3 297.8,227.1 298.5,230.9 299.9,234.2 301.5,237.8 302.5,241.3 303.5,244.6 304.9,248.2 305.7,251.3 307.1,254.4 308.5,257.9 309.9,261.2 310.9,264.8 312.4,267.8 313.3,271.2 314.4,274.5 315.6,278.0 316.7,281.2 317.9,284.9 319.3,288.1 320.3,291.1 322.2,294.6 323.3,298.9 324.7,302.2 327.1,304.4 328.9,307.3 331.1,308.9 333.6,310.5 336.6,312.4 337.6,316.3 339.7,320.2 340.9,323.5 342.3,326.4 344.4,328.6 346.0,331.7 349.3,334.4 351.9,336.3 353.9,339.5 356.4,342.0 358.8,344.8 361.8,347.2 363.9,349.1 366.7,348.6 370.1,348.0 373.2,347.7 378.4,350.4 381.8,354.2 385.2,355.0 387.2,357.7 389.9,360.3 392.0,363.6 394.3,365.8 396.1,368.0 398.8,370.4 402.3,372.5 405.6,374.6 408.6,375.0 412.4,374.6 415.3,377.2 417.6,378.9 420.1,380.1 422.9,382.0 426.1,383.2 431.0,382.8" fill="none" stroke="#eaf6f6" stroke-width="4.0" stroke-linejoin="round"/>
<polyline shape-rendering="auto" points="0.5,388.0 3.9,385.9 7.7,384.4 10.2,381.9 12.5,380.1 14.8,378.2 18.3,379.6 23.7,378.8 25.5,376.7 27.7,374.4 30.0,372.0 32.6,370.2 34.7,368.1 36.5,365.1 39.1,363.3 41.1,360.4 43.2,358.1 47.2,356.2 50.3,355.1 54.2,354.5 57.4,354.2 62.8,355.1 65.1,353.0 68.1,351.6 70.3,348.9 72.5,345.7 75.2,342.7 78.9,340.3 82.3,338.2 83.8,335.0 84.7,332.3 86.7,329.6 87.8,326.9 89.4,324.0 91.2,320.7 93.0,317.8 95.6,315.9 97.5,313.7 100.1,311.6 101.9,308.3 103.7,304.4 105.0,301.4 106.3,298.4 106.8,296.1 107.6,293.0 109.0,290.2 109.9,287.3 111.9,284.1 113.3,280.7 114.3,277.8 115.5,274.6 116.4,271.2 117.4,268.0 118.6,265.5 119.2,262.4 119.8,259.5 121.2,256.9 122.3,253.4 122.8,250.9 123.4,247.8 124.5,244.6 125.7,242.1 126.5,239.5 127.7,236.2 129.2,234.0 130.1,230.8 131.7,228.4 133.1,225.5 134.0,222.4 134.6,219.0 135.5,216.1 136.9,212.1 137.0,208.9 138.1,205.8 139.6,202.3 141.6,198.7 143.3,195.4 143.7,192.0 144.9,188.8 146.2,185.6 146.7,182.2 147.5,178.8 148.5,175.5 149.5,173.3 150.3,170.4 150.7,167.1 151.6,164.3 151.8,161.2 152.3,157.6 152.9,154.5 153.7,151.6 156.0,148.3 158.6,145.8 159.7,142.8 161.3,140.3 162.8,138.0 164.9,134.7 166.3,132.3 167.8,129.3 169.5,126.2 171.6,124.1 173.0,120.8 175.9,118.9 177.5,116.2 178.9,113.2 180.8,110.7 182.6,108.3 187.5,108.3 189.7,105.1 190.9,102.9 193.3,99.3 195.2,96.7 196.5,93.4 197.8,91.3 199.0,88.0 200.3,84.8 200.7,81.1 201.6,78.1 202.9,74.5 204.1,71.4 205.1,67.5 206.8,64.8 207.7,61.0 209.0,57.7 209.9,54.0 210.3,50.2 211.5,46.6 214.4,44.7 218.3,43.7 220.9,47.6 221.4,50.4 221.7,53.8 222.8,57.2 224.0,60.3 225.7,63.0 227.1,66.8 228.0,71.1 228.6,74.5 230.0,77.6 230.3,80.7 231.5,84.2 232.5,87.5 234.1,91.6 235.3,94.8 237.8,98.0 239.9,101.5 242.0,104.4 245.9,105.4 247.9,107.9 250.7,110.2 252.7,113.4 254.1,116.0 255.5,118.9 256.7,122.5 258.2,125.9 260.3,128.9 261.3,132.3 262.6,135.4 264.2,137.4 265.0,140.1 267.1,143.4 268.1,145.8 270.2,149.0 272.9,151.6 274.5,155.1 275.2,158.4 276.2,161.3 277.7,165.1 279.3,169.0 280.0,172.6 280.9,175.9 281.7,178.8 283.0,181.2 283.6,184.4 284.6,187.2 285.7,190.4 286.9,193.3 288.3,196.3 288.9,200.0 290.1,202.9 291.3,206.6 292.1,210.0 293.1,212.9 294.3,216.5 295.5,219.6 296.6,223.3 297.8,227.1 298.5,230.9 299.9,234.2 301.5,237.8 302.5,241.3 303.5,244.6 304.9,248.2 305.7,251.3 307.1,254.4 308.5,257.9 309.9,261.2 310.9,264.8 312.4,267.8 313.3,271.2 314.4,274.5 315.6,278.0 316.7,281.2 317.9,284.9 319.3,288.1 320.3,291.1 322.2,294.6 323.3,298.9 324.7,302.2 327.1,304.4 328.9,307.3 331.1,308.9 333.6,310.5 336.6,312.4 337.6,316.3 339.7,320.2 340.9,323.5 342.3,326.4 344.4,328.6 346.0,331.7 349.3,334.4 351.9,336.3 353.9,339.5 356.4,342.0 358.8,344.8 361.8,347.2 363.9,349.1 366.7,348.6 370.1,348.0 373.2,347.7 378.4,350.4 381.8,354.2 385.2,355.0 387.2,357.7 389.9,360.3 392.0,363.6 394.3,365.8 396.1,368.0 398.8,370.4 402.3,372.5 405.6,374.6 408.6,375.0 412.4,374.6 415.3,377.2 417.6,378.9 420.1,380.1 422.9,382.0 426.1,383.2 431.0,382.8" fill="none" stroke="#ff0000" stroke-width="2.2" stroke-linejoin="round"/>
</g>
<rect x="430" y="0" width="1" height="397" fill="#4a4af8"/><rect x="431" y="0" width="1" height="397" fill="#5a5a8a"/>
<rect x="0" y="395" width="432" height="1" fill="#4040d8"/><rect x="0" y="396" width="432" height="1" fill="#908c90"/>
</svg>
<div class="a" style="left:615px;top:140px;width:1px;height:400px;background:#d2d2c6"></div>
<div class="t" style="left:276px;top:260px;font-size:12px;color:#111;font-weight:bold;-webkit-text-stroke:0.25px #111;">電波反射板</div>
<svg class="a" style="left:336px;top:261px" width="15" height="9"><path d="M1 4.5H10" stroke="#111" stroke-width="1.5"/><path d="M8.5 1.5L13.5 4.5L8.5 7.5Z" fill="#111"/></svg>
<div class="t" style="left:246px;top:443px;width:14px;font-weight:bold;font-size:12px;color:#111;line-height:12px;-webkit-text-stroke:0.25px #111">入<br>山<br>届</div>
<svg class="a" style="left:248px;top:477px" width="8" height="16"><path d="M4 0V14M1 10L4 14.5L7 10" fill="none" stroke="#111" stroke-width="1.3"/></svg>
<div class="t" style="left:396px;top:148px;font-size:12px;color:#111;">丸</div>
<div class="t" style="left:396px;top:159px;font-size:12px;color:#111;">山</div>
<svg class="a" style="left:396px;top:143px" width="14" height="33"><path d="M2.5 4.5Q7 0.5 11.5 4.5" fill="none" stroke="#1a1a2a" stroke-width="1.3"/><path d="M2.5 28.5Q7 32.5 11.5 28.5" fill="none" stroke="#1a1a2a" stroke-width="1.3"/></svg>
<div class="a" style="left:183px;top:541px;width:431px;height:87px;background:#a3b6fa;border:1px solid #3c3c50;border-right:2px solid #3c3c50;border-top:1px solid #888"></div><div class="a" style="left:613px;top:541px;width:1px;height:87px;background:#c0c0c0"></div>
<div class="a" style="left:184px;top:542px;width:428px;height:22px;background:#f0f0f0;border-top:1px solid #fff;border-bottom:2px solid #6c6c6c;border-right:1px solid #6c6c6c"></div>
<div class="t" style="left:182px;width:429px;text-align:center;top:547px;font-size:12px;font-weight:bold;color:#111">区間 <span style="font-family:'Liberation Serif',serif;font-size:13px;margin-left:4px">1</span></div>
<div class="t mono" style="left:183px;width:429px;text-align:center;top:564px;font-size:13px;color:#141428"><i>7</i><i>.</i><i>9</i><i>5</i><i>9</i><i>k</i><i class="n">m</i></div>
<div class="t mono" style="left:183px;width:429px;text-align:center;top:580px;font-size:13px;color:#141428"><i>8</i><i>.</i><i>1</i><i>0</i><i>0</i><i>k</i><i class="n">m</i></div>
<div class="t mono" style="left:183px;width:429px;text-align:center;top:596px;font-size:13px;color:#141428"><i>0</i><i>3</i><i>:</i><i>5</i><i>0</i><i>:</i><i>2</i><i>5</i></div>
<div class="t mono" style="left:183px;width:429px;text-align:center;top:612px;font-size:13px;color:#141428"><i>7</i><i>.</i><i>6</i><i>9</i><i>1</i><i class="n">m</i></div>
<div class="t" style="left:100px;width:72px;text-align:right;top:564px;font-size:12px;font-weight:bold;-webkit-text-stroke:0.2px;color:#20202a">直線距離</div>
<div class="t" style="left:100px;width:72px;text-align:right;top:580px;font-size:12px;font-weight:bold;-webkit-text-stroke:0.2px;color:#20202a">沿面距離</div>
<div class="t" style="left:100px;width:72px;text-align:right;top:596px;font-size:12px;font-weight:bold;-webkit-text-stroke:0.2px;color:#20202a">所要時間</div>
<div class="t" style="left:100px;width:72px;text-align:right;top:612px;font-size:12px;font-weight:bold;-webkit-text-stroke:0.2px;color:#20202a">標高差</div>
<div class="a" style="left:641px;top:115px;width:175px;height:1px;background:#707070"></div>
<div class="a" style="left:642px;top:116px;width:172px;height:17px;background:#f0f0f0;border-top:1px solid #fff;border-left:1px solid #fff;border-bottom:2px solid #6a6a6a;border-right:2px solid #6a6a6a"></div>
<div class="t" id="f14" style="left:643px;top:119px;font-size:12px;color:#505050;transform:scaleX(0.9126);">全区間 (トラック)</div>
<div class="a" style="left:647px;top:136px;width:161px;height:146px;background:#fff;border:1px solid #a0a0a0"></div>
<div class="a" style="left:648px;top:150px;width:159px;height:1px;background:#a8a8a8"></div>
<div class="t" style="left:649px;top:138px;font-size:12px;color:#000;font-weight:bold;">距離</div>
<div class="t mono" style="left:648px;width:157px;text-align:right;top:137px;font-size:13px;color:#000"><i>7</i><i>.</i><i>9</i><i>5</i><i>9</i><i>k</i><i class="n">m</i></div>
<div class="a" style="left:648px;top:163px;width:159px;height:1px;background:#a8a8a8"></div>
<div class="t" style="left:649px;top:151px;font-size:12px;color:#000;font-weight:bold;">沿面距離</div>
<div class="t mono" style="left:648px;width:157px;text-align:right;top:150px;font-size:13px;color:#000"><i>8</i><i>.</i><i>1</i><i>0</i><i>0</i><i>k</i><i class="n">m</i></div>
<div class="a" style="left:648px;top:176px;width:159px;height:1px;background:#a8a8a8"></div>
<div class="t" style="left:649px;top:164px;font-size:12px;color:#000;font-weight:bold;">標高差</div>
<div class="t mono" style="left:648px;width:157px;text-align:right;top:163px;font-size:13px;color:#000"><i>7</i><i>.</i><i>6</i><i>9</i><i>1</i><i class="n">m</i></div>
<div class="a" style="left:648px;top:189px;width:159px;height:1px;background:#a8a8a8"></div>
<div class="t" style="left:649px;top:177px;font-size:12px;color:#000;font-weight:bold;">方位</div>
<div class="t mono" style="left:648px;width:157px;text-align:right;top:176px;font-size:13px;color:#000"><i>3</i><i>2</i><i>.</i><i>9</i><i>7</i><i>°</i><i>&nbsp;</i></div>
<div class="a" style="left:648px;top:202px;width:159px;height:1px;background:#a8a8a8"></div>
<div class="t" style="left:649px;top:190px;font-size:12px;color:#000;font-weight:bold;">俯角</div>
<svg class="a" style="left:674px;top:193px" width="13" height="9"><path d="M1 4.5H11M8 1.5L11.5 4.5L8 7.5" fill="none" stroke="#000" stroke-width="1.4"/></svg>
<div class="t mono" style="left:648px;width:157px;text-align:right;top:189px;font-size:13px;color:#000"><i>–</i><i>4</i><i>7</i><i>.</i><i>6</i><i>2</i><i>°</i><i>&nbsp;</i></div>
<div class="a" style="left:648px;top:215px;width:159px;height:1px;background:#a8a8a8"></div>
<div class="t" style="left:649px;top:203px;font-size:12px;color:#000;font-weight:bold;">俯角</div>
<svg class="a" style="left:674px;top:206px" width="13" height="9"><path d="M1 4.5H11.5M4.5 1.5L1 4.5L4.5 7.5" fill="none" stroke="#000" stroke-width="1.4"/></svg>
<div class="t mono" style="left:648px;width:157px;text-align:right;top:202px;font-size:13px;color:#000"><i>4</i><i>7</i><i>.</i><i>6</i><i>2</i><i>°</i><i>&nbsp;</i></div>
<div class="a" style="left:648px;top:228px;width:159px;height:1px;background:#a8a8a8"></div>
<div class="t" style="left:649px;top:216px;font-size:12px;color:#000;font-weight:bold;">沈み量</div>
<div class="t mono" style="left:648px;width:157px;text-align:right;top:215px;font-size:13px;color:#000"><i>–</i><i>0</i><i class="n">m</i></div>
<div class="a" style="left:648px;top:241px;width:159px;height:1px;background:#a8a8a8"></div>
<div class="t" style="left:649px;top:229px;font-size:12px;color:#000;font-weight:bold;">所要時間</div>
<div class="t mono" style="left:648px;width:157px;text-align:right;top:228px;font-size:13px;color:#000"><i>0</i><i>3</i><i>:</i><i>5</i><i>0</i><i>:</i><i>2</i><i>5</i></div>
<div class="a" style="left:648px;top:254px;width:159px;height:1px;background:#a8a8a8"></div>
<div class="t" id="f15" style="left:649px;top:242px;font-size:12px;color:#000;font-weight:bold;transform:scaleX(1.0159);">累積標高(+)</div>
<div class="t mono" style="left:648px;width:157px;text-align:right;top:241px;font-size:13px;color:#000"><i>5</i><i>9</i><i>1</i><i>.</i><i>2</i><i>1</i><i>1</i><i class="n">m</i></div>
<div class="a" style="left:648px;top:267px;width:159px;height:1px;background:#a8a8a8"></div>
<div class="t" id="f16" style="left:649px;top:255px;font-size:12px;color:#000;font-weight:bold;transform:scaleX(1.0667);">累積標高(-)</div>
<div class="t mono" style="left:648px;width:157px;text-align:right;top:254px;font-size:13px;color:#000"><i>–</i><i>5</i><i>8</i><i>3</i><i>.</i><i>5</i><i>2</i><i>0</i><i class="n">m</i></div>
<div class="t" style="left:649px;top:268px;font-size:12px;color:#000;font-weight:bold;">平均速度</div>
<div class="t mono" style="left:648px;width:157px;text-align:right;top:267px;font-size:13px;color:#000"><i>2</i><i>.</i><i>1</i><i>k</i><i class="n">m</i><i>/</i><i>h</i></div>
<div class="a" style="left:642px;top:286px;width:172px;height:17px;background:#f0f0f0;border-top:1px solid #fff;border-left:1px solid #fff;border-bottom:2px solid #6a6a6a;border-right:2px solid #6a6a6a"></div>
<div class="t" id="f17" style="left:643px;top:289px;font-size:12px;color:#505050;transform:scaleX(1.0445);">全区間 (地形)</div>
<div class="a" style="left:647px;top:305px;width:161px;height:146px;background:#fff;border:1px solid #a0a0a0"></div>
<div class="a" style="left:648px;top:319px;width:159px;height:1px;background:#a8a8a8"></div>
<div class="t" style="left:649px;top:307px;font-size:12px;color:#000;font-weight:bold;">距離</div>
<div class="t mono" style="left:648px;width:157px;text-align:right;top:306px;font-size:13px;color:#000"><i>7</i><i>.</i><i>9</i><i>5</i><i>9</i><i>k</i><i class="n">m</i></div>
<div class="a" style="left:648px;top:332px;width:159px;height:1px;background:#a8a8a8"></div>
<div class="t" style="left:649px;top:320px;font-size:12px;color:#000;font-weight:bold;">沿面距離</div>
<div class="t mono" style="left:648px;width:157px;text-align:right;top:319px;font-size:13px;color:#000"><i>8</i><i>.</i><i>1</i><i>0</i><i>2</i><i>k</i><i class="n">m</i></div>
<div class="a" style="left:648px;top:345px;width:159px;height:1px;background:#a8a8a8"></div>
<div class="t" style="left:649px;top:333px;font-size:12px;color:#000;font-weight:bold;">標高差</div>
<div class="t mono" style="left:648px;width:157px;text-align:right;top:332px;font-size:13px;color:#000"><i>7</i><i>.</i><i>6</i><i>9</i><i>1</i><i class="n">m</i></div>
<div class="a" style="left:648px;top:358px;width:159px;height:1px;background:#a8a8a8"></div>
<div class="t" style="left:649px;top:346px;font-size:12px;color:#000;font-weight:bold;">方位</div>
<div class="t mono" style="left:648px;width:157px;text-align:right;top:345px;font-size:13px;color:#000"><i>3</i><i>2</i><i>.</i><i>9</i><i>7</i><i>°</i><i>&nbsp;</i></div>
<div class="a" style="left:648px;top:371px;width:159px;height:1px;background:#a8a8a8"></div>
<div class="t" style="left:649px;top:359px;font-size:12px;color:#000;font-weight:bold;">俯角</div>
<svg class="a" style="left:674px;top:362px" width="13" height="9"><path d="M1 4.5H11M8 1.5L11.5 4.5L8 7.5" fill="none" stroke="#000" stroke-width="1.4"/></svg>
<div class="t mono" style="left:648px;width:157px;text-align:right;top:358px;font-size:13px;color:#000"><i>–</i><i>4</i><i>7</i><i>.</i><i>6</i><i>2</i><i>°</i><i>&nbsp;</i></div>
<div class="a" style="left:648px;top:384px;width:159px;height:1px;background:#a8a8a8"></div>
<div class="t" style="left:649px;top:372px;font-size:12px;color:#000;font-weight:bold;">俯角</div>
<svg class="a" style="left:674px;top:375px" width="13" height="9"><path d="M1 4.5H11.5M4.5 1.5L1 4.5L4.5 7.5" fill="none" stroke="#000" stroke-width="1.4"/></svg>
<div class="t mono" style="left:648px;width:157px;text-align:right;top:371px;font-size:13px;color:#000"><i>4</i><i>7</i><i>.</i><i>6</i><i>2</i><i>°</i><i>&nbsp;</i></div>
<div class="a" style="left:648px;top:397px;width:159px;height:1px;background:#a8a8a8"></div>
<div class="t" style="left:649px;top:385px;font-size:12px;color:#000;font-weight:bold;">沈み量</div>
<div class="t mono" style="left:648px;width:157px;text-align:right;top:384px;font-size:13px;color:#000"><i>–</i><i>0</i><i class="n">m</i></div>
<div class="a" style="left:648px;top:410px;width:159px;height:1px;background:#a8a8a8"></div>
<div class="t" style="left:649px;top:398px;font-size:12px;color:#000;font-weight:bold;">推定時間</div>
<div class="t mono" style="left:648px;width:157px;text-align:right;top:397px;font-size:13px;color:#000"><i>0</i><i>2</i><i>:</i><i>4</i><i>0</i><i>:</i><i>1</i><i>0</i></div>
<div class="a" style="left:648px;top:423px;width:159px;height:1px;background:#a8a8a8"></div>
<div class="t" id="f18" style="left:649px;top:411px;font-size:12px;color:#000;font-weight:bold;transform:scaleX(1.0159);">累積標高(+)</div>
<div class="t mono" style="left:648px;width:157px;text-align:right;top:410px;font-size:13px;color:#000"><i>6</i><i>0</i><i>3</i><i>.</i><i>8</i><i>3</i><i>6</i><i class="n">m</i></div>
<div class="a" style="left:648px;top:436px;width:159px;height:1px;background:#a8a8a8"></div>
<div class="t" id="f19" style="left:649px;top:424px;font-size:12px;color:#000;font-weight:bold;transform:scaleX(1.0667);">累積標高(-)</div>
<div class="t mono" style="left:648px;width:157px;text-align:right;top:423px;font-size:13px;color:#000"><i>–</i><i>6</i><i>0</i><i>4</i><i>.</i><i>5</i><i>0</i><i>7</i><i class="n">m</i></div>
<div class="t" style="left:649px;top:437px;font-size:12px;color:#000;font-weight:bold;">見通し</div>
<div class="t" style="left:648px;width:158px;text-align:right;top:437px;font-size:12px;font-weight:bold">見えます</div>
</body></html>
